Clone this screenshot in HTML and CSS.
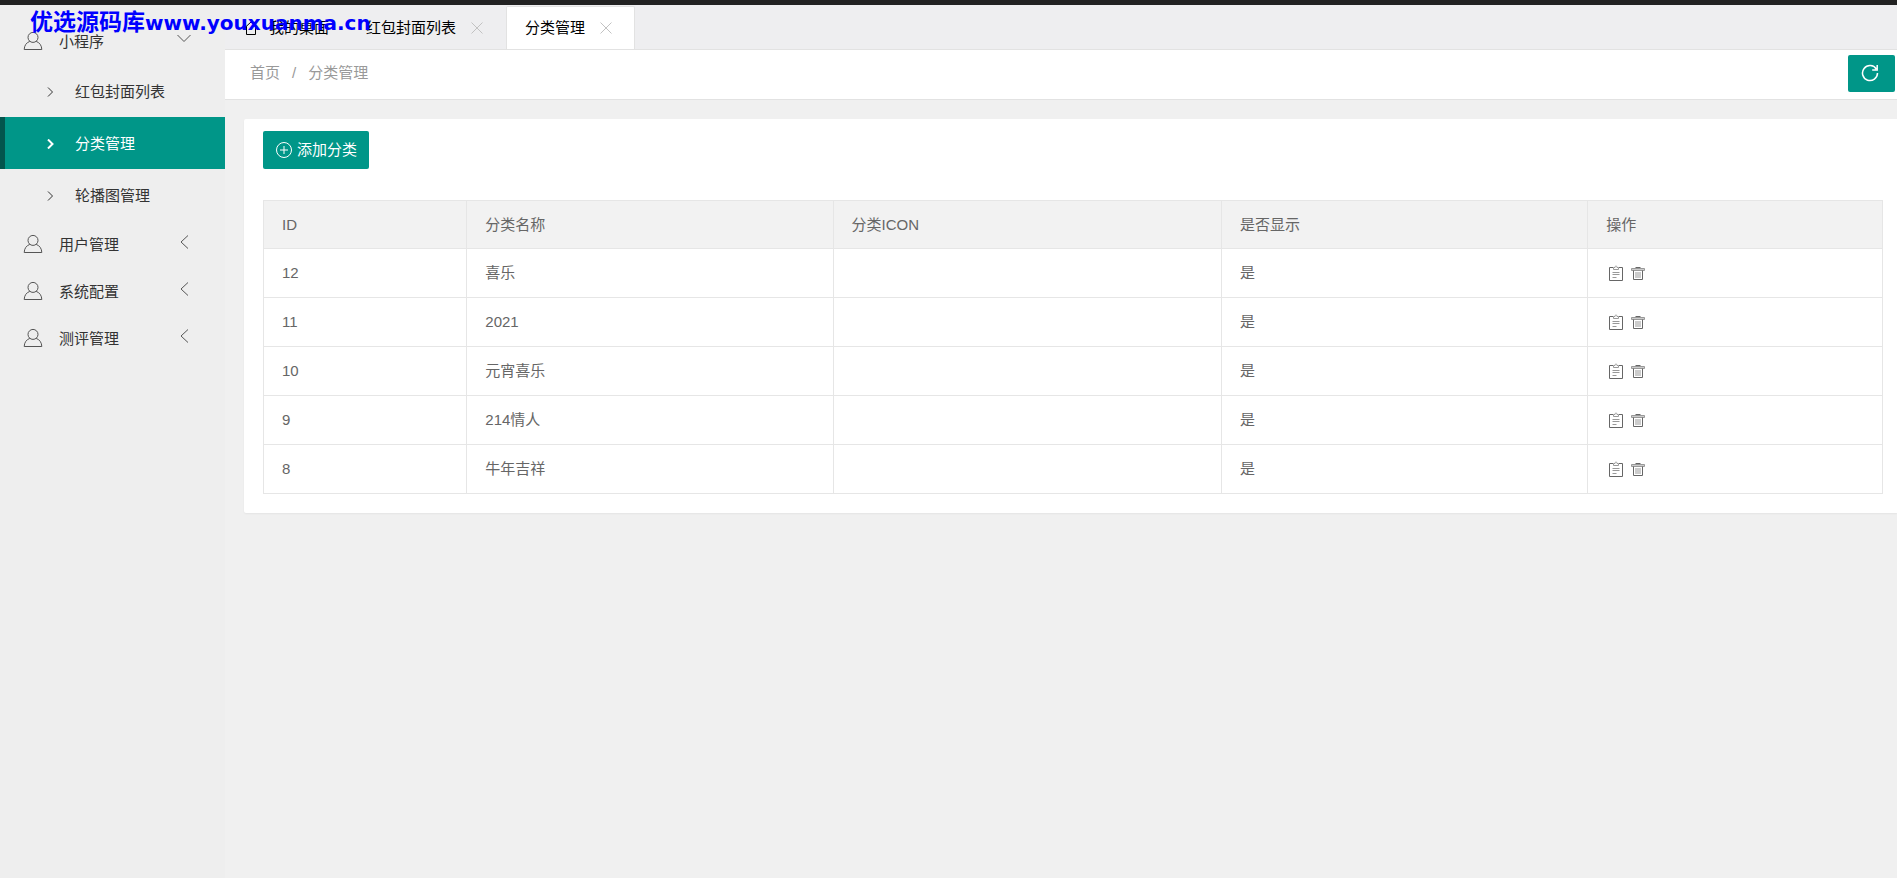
FILE: index.html
```html
<!DOCTYPE html>
<html lang="zh-CN">
<head>
  <meta charset="UTF-8">
  <meta name="viewport" content="width=device-width, initial-scale=1">
  <title>分类管理</title>
  <link rel="stylesheet" href="styles.css">
</head>
<body>
  <!-- 图标 -->
  <svg class="sprite" aria-hidden="true">
    <symbol id="i-user" viewBox="0 0 20 20"><circle cx="10" cy="6.4" r="5"/><path d="M6.8 10.4C3.3 11.6 1.3 14.6 1.2 18.5H18.8C18.7 14.6 16.7 11.6 13.2 10.4"/></symbol>
    <symbol id="i-right" viewBox="0 0 10 10"><path d="M2 .5 6.500 5 2 9.5"/></symbol>
    <symbol id="i-left" viewBox="0 0 14 14"><path d="M11 .5 4 7l7 6.500"/></symbol>
    <symbol id="i-down" viewBox="0 0 14 14"><path d="M.5 3 7 9.500 13.500 3"/></symbol>
    <symbol id="i-close" viewBox="0 0 12 12"><path d="M.5.5l11 11M11.500.5l-11 11"/></symbol>
    <symbol id="i-home" viewBox="0 0 14 14"><path d="M.5 7 7 1l6.500 6M2.500 5.500v8h9v-8"/></symbol>
    <symbol id="i-add" viewBox="0 0 18 18"><circle cx="9" cy="9" r="7.500"/><path d="M9 5v8M5 9h8"/></symbol>
    <symbol id="i-refresh" viewBox="0 0 18 18"><path d="M15.300 5A7.500 7.500 0 1 0 16.500 9M16.200 1v5h-5"/></symbol>
    <symbol id="i-edit" viewBox="0 0 16 16"><path d="M5 2.500H1.500v13h13v-13H11"/><path class="light" d="M5.500 4.500v-2H7c0-2 2-2 2 0H10.500v2zM4.500 7.500h7M4.500 9.500h7M4.500 12.500h4"/></symbol>
    <symbol id="i-delete" viewBox="0 0 16 16"><path class="light lid" d="M1.500 3.500h13v2h-13z"/><path d="M5.500 2.500h5M3.500 5.500v9h9v-9"/><path class="light" d="M6 7v6M8 7v6M10 7v6"/></symbol>
  </svg>

  <div class="topbar"></div>
  <div class="watermark">优选源码库<span>www.youxuanma.cn</span></div>

  <div class="layout">
    <!-- 左侧菜单 -->
    <nav class="side">
      <a class="menu" href="#"><svg class="user"><use href="#i-user"/></svg><span>小程序</span><svg class="arrow"><use href="#i-down"/></svg></a>
      <a class="sub" href="#"><svg><use href="#i-right"/></svg>红包封面列表</a>
      <a class="sub active" href="#"><svg><use href="#i-right"/></svg>分类管理</a>
      <a class="sub" href="#"><svg><use href="#i-right"/></svg>轮播图管理</a>
      <a class="menu" href="#"><svg class="user"><use href="#i-user"/></svg><span>用户管理</span><svg class="arrow"><use href="#i-left"/></svg></a>
      <a class="menu" href="#"><svg class="user"><use href="#i-user"/></svg><span>系统配置</span><svg class="arrow"><use href="#i-left"/></svg></a>
      <a class="menu" href="#"><svg class="user"><use href="#i-user"/></svg><span>测评管理</span><svg class="arrow"><use href="#i-left"/></svg></a>
    </nav>

    <main class="page">
      <!-- 标签页 -->
      <div class="tabs">
        <div class="tab first"><a href="#"><svg class="home"><use href="#i-home"/></svg>我的桌面</a></div>
        <div class="tab"><a href="#">红包封面列表</a><button aria-label="关闭"><svg><use href="#i-close"/></svg></button></div>
        <div class="tab current"><a href="#">分类管理</a><button aria-label="关闭"><svg><use href="#i-close"/></svg></button></div>
      </div>

      <div class="crumbs">
        <div class="path"><a href="#">首页</a><span>/</span><a href="#">分类管理</a></div>
        <button class="btn refresh" aria-label="刷新"><svg><use href="#i-refresh"/></svg></button>
      </div>

      <section class="card">
        <button class="btn add"><svg><use href="#i-add"/></svg>添加分类</button>
        <table>
          <thead>
            <tr><th class="c-id">ID</th><th class="c-name">分类名称</th><th class="c-icon">分类ICON</th><th class="c-show">是否显示</th><th>操作</th></tr>
          </thead>
          <tbody>
            <tr><td>12</td><td>喜乐</td><td></td><td>是</td><td><div class="ops"><a href="#" aria-label="编辑"><svg><use href="#i-edit"/></svg></a><a href="#" aria-label="删除"><svg><use href="#i-delete"/></svg></a></div></td></tr>
            <tr><td>11</td><td>2021</td><td></td><td>是</td><td><div class="ops"><a href="#" aria-label="编辑"><svg><use href="#i-edit"/></svg></a><a href="#" aria-label="删除"><svg><use href="#i-delete"/></svg></a></div></td></tr>
            <tr><td>10</td><td>元宵喜乐</td><td></td><td>是</td><td><div class="ops"><a href="#" aria-label="编辑"><svg><use href="#i-edit"/></svg></a><a href="#" aria-label="删除"><svg><use href="#i-delete"/></svg></a></div></td></tr>
            <tr><td>9</td><td>214情人</td><td></td><td>是</td><td><div class="ops"><a href="#" aria-label="编辑"><svg><use href="#i-edit"/></svg></a><a href="#" aria-label="删除"><svg><use href="#i-delete"/></svg></a></div></td></tr>
            <tr><td>8</td><td>牛年吉祥</td><td></td><td>是</td><td><div class="ops"><a href="#" aria-label="编辑"><svg><use href="#i-edit"/></svg></a><a href="#" aria-label="删除"><svg><use href="#i-delete"/></svg></a></div></td></tr>
          </tbody>
        </table>
      </section>
    </main>
  </div>
</body>
</html>
```

FILE: styles.css
```css
* {
  box-sizing: border-box;
}
body {
  margin: 0;
  min-height: 100vh;
  display: flex;
  flex-direction: column;
  font: 15px/24px "Liberation Sans", "Noto Sans CJK SC", sans-serif;
  color: #333;
  background: #f0f0f0;
}
a {
  color: inherit;
  text-decoration: none;
}
button {
  font: inherit;
  border: none;
  padding: 0;
  background: none;
  cursor: pointer;
}
svg {
  display: block;
  flex: none;
  fill: none;
  stroke: currentColor;
}
.sprite {
  position: absolute;
  width: 0;
  height: 0;
}
.topbar {
  height: 5px;
  background: #222;
}
.watermark {
  position: absolute;
  top: 6px;
  left: 30px;
  z-index: 10;
  font: bold 23px/28px "Noto Sans CJK SC", sans-serif;
  color: #00f;
  white-space: nowrap;
  pointer-events: none;
}
.watermark span {
  font-family: "DejaVu Sans", sans-serif;
  font-size: 20px;
}
.layout {
  flex: 1;
  display: flex;
}

/* 左侧菜单 */
.side {
  width: 225px;
  flex: none;
  padding-top: 13px;
  background: #eee;
}
.menu {
  display: flex;
  align-items: center;
  height: 47px;
  padding: 0 34px 0 23px;
}
.menu span {
  flex: 1;
  margin-left: 16px;
}
.user {
  width: 20px;
  height: 20px;
  margin-bottom: 2px;
  color: #555;
}
.arrow {
  width: 14px;
  height: 14px;
  margin-bottom: 6px;
  color: #555;
}
.sub {
  display: flex;
  align-items: center;
  gap: 19px;
  height: 52px;
  padding: 1px 0 0 41px;
  border-left: 5px solid transparent;
}
.sub svg {
  width: 10px;
  height: 10px;
}
.active {
  color: #fff;
  background: #009688;
  border-color: #03554d;
}
.active svg {
  stroke-width: 2;
}

/* 标签页 */
.page {
  flex: 1;
  min-width: 0;
}
.tabs {
  display: flex;
  height: 45px;
  padding-top: 1px;
  color: #000;
  background: #eeeef0;
  border-bottom: 1px solid #e2e2e2;
}
.tab {
  display: flex;
  align-items: center;
  gap: 15px;
  padding: 0 22px 0 18px;
  border: 1px solid transparent;
  border-left: none;
}
.first {
  padding-right: 18px;
}
.tab a {
  display: flex;
  align-items: center;
  gap: 10px;
}
.tab svg {
  width: 12px;
  height: 12px;
  color: #c2c2c2;
}
.tab .home {
  width: 16px;
  height: 14px;
  color: #000;
}
.current {
  background: #fff;
  border: 1px solid #e2e2e2;
  border-bottom: none;
  border-radius: 2px 2px 0 0;
}

.crumbs {
  display: flex;
  align-items: center;
  justify-content: space-between;
  height: 50px;
  padding: 0 2px 3px 25px;
  background: #fff;
  border-bottom: 1px solid #e2e2e2;
}
.path {
  display: flex;
  gap: 12px;
  color: #999;
}
.btn {
  display: flex;
  align-items: center;
  justify-content: center;
  height: 38px;
  color: #fff;
  background: #009688;
  border-radius: 2px;
}
.btn svg {
  width: 18px;
  height: 18px;
}
.refresh {
  width: 47px;
  height: 37px;
  padding-right: 3px;
}
.refresh svg {
  stroke-width: 1.5;
}

/* 分类列表 */
.card {
  margin: 19px 0 0 19px;
  padding: 12px 14px 19px 19px;
  background: #fff;
  border-radius: 2px 0 0 2px;
  box-shadow: 0 1px 2px rgba(0, 0, 0, 0.05);
}
.add {
  gap: 4px;
  padding: 0 12px;
}
table {
  width: 100%;
  margin-top: 31px;
  table-layout: fixed;
  border-collapse: collapse;
  color: #666;
}
th, td {
  height: 49px;
  padding: 0 18px;
  border: 1px solid #e6e6e6;
  font-weight: normal;
  text-align: left;
}
th {
  height: 48px;
  background: #f2f2f2;
}
.c-id {
  width: 12.56%;
}
.c-name, .c-show {
  width: 22.62%;
}
.c-icon {
  width: 24%;
}
.ops {
  display: flex;
  gap: 6px;
  padding-left: 2px;
}
.ops svg {
  width: 16px;
  height: 16px;
  margin-bottom: 1px;
}
.light {
  stroke: #999;
}
.lid {
  fill: #ccc;
}
```
